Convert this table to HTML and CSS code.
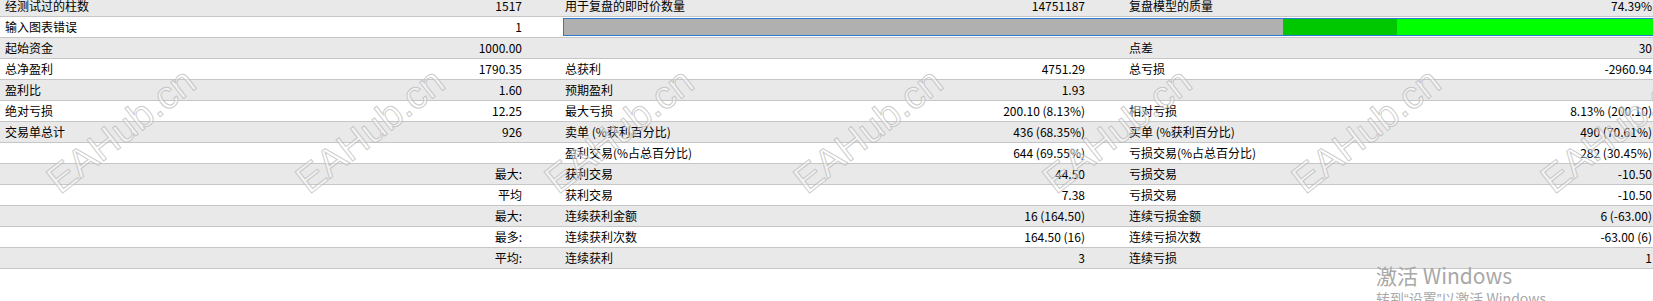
FILE: index.html
```html
<!DOCTYPE html>
<html lang="zh-CN">
<head>
<meta charset="utf-8">
<title>测试报告</title>
<link rel="stylesheet" href="styles.css">
</head>
<body>
<div class="report">
  <div class="row alt">
    <div class="c1">经测试过的柱数</div><div class="c2">1517</div>
    <div class="c3">用于复盘的即时价数量</div><div class="c4">14751187</div>
    <div class="c5">复盘模型的质量</div><div class="c6">74.39%</div>
  </div>
  <div class="row">
    <div class="c1">输入图表错误</div><div class="c2">1</div>
    <div class="bar"><div class="seg gray"></div><div class="seg dark"></div><div class="seg light"></div></div>
  </div>
  <div class="row alt">
    <div class="c1">起始资金</div><div class="c2">1000.00</div>
    <div class="c3"></div><div class="c4"></div>
    <div class="c5">点差</div><div class="c6">30</div>
  </div>
  <div class="row">
    <div class="c1">总净盈利</div><div class="c2">1790.35</div>
    <div class="c3">总获利</div><div class="c4">4751.29</div>
    <div class="c5">总亏损</div><div class="c6">-2960.94</div>
  </div>
  <div class="row alt">
    <div class="c1">盈利比</div><div class="c2">1.60</div>
    <div class="c3">预期盈利</div><div class="c4">1.93</div>
    <div class="c5"></div><div class="c6"></div>
  </div>
  <div class="row">
    <div class="c1">绝对亏损</div><div class="c2">12.25</div>
    <div class="c3">最大亏损</div><div class="c4">200.10 (8.13%)</div>
    <div class="c5">相对亏损</div><div class="c6">8.13% (200.10)</div>
  </div>
  <div class="row alt">
    <div class="c1">交易单总计</div><div class="c2">926</div>
    <div class="c3">卖单 (%获利百分比)</div><div class="c4">436 (68.35%)</div>
    <div class="c5">买单 (%获利百分比)</div><div class="c6">490 (70.61%)</div>
  </div>
  <div class="row">
    <div class="c1"></div><div class="c2"></div>
    <div class="c3">盈利交易(%占总百分比)</div><div class="c4">644 (69.55%)</div>
    <div class="c5">亏损交易(%占总百分比)</div><div class="c6">282 (30.45%)</div>
  </div>
  <div class="row alt">
    <div class="c1"></div><div class="c2">最大:</div>
    <div class="c3">获利交易</div><div class="c4">44.50</div>
    <div class="c5">亏损交易</div><div class="c6">-10.50</div>
  </div>
  <div class="row">
    <div class="c1"></div><div class="c2">平均</div>
    <div class="c3">获利交易</div><div class="c4">7.38</div>
    <div class="c5">亏损交易</div><div class="c6">-10.50</div>
  </div>
  <div class="row alt">
    <div class="c1"></div><div class="c2">最大:</div>
    <div class="c3">连续获利金额</div><div class="c4">16 (164.50)</div>
    <div class="c5">连续亏损金额</div><div class="c6">6 (-63.00)</div>
  </div>
  <div class="row">
    <div class="c1"></div><div class="c2">最多:</div>
    <div class="c3">连续获利次数</div><div class="c4">164.50 (16)</div>
    <div class="c5">连续亏损次数</div><div class="c6">-63.00 (6)</div>
  </div>
  <div class="row alt">
    <div class="c1"></div><div class="c2">平均:</div>
    <div class="c3">连续获利</div><div class="c4">3</div>
    <div class="c5">连续亏损</div><div class="c6">1</div>
  </div>
</div>

<div class="watermarks">
  <span class="wm">EAHub.cn</span>
  <span class="wm">EAHub.cn</span>
  <span class="wm">EAHub.cn</span>
  <span class="wm">EAHub.cn</span>
  <span class="wm">EAHub.cn</span>
  <span class="wm">EAHub.cn</span>
  <span class="wm">EAHub.cn</span>
</div>

<div class="activate">
  <div class="act-title">激活 Windows</div>
  <div class="act-sub">转到<span class="q">“</span>设置<span class="q">”</span>以激活 Windows。</div>
</div>
</body>
</html>
```

FILE: styles.css
```css
html, body {
  margin: 0;
  padding: 0;
}
body {
  width: 1653px;
  height: 301px;
  overflow: hidden;
  position: relative;
  background: #ffffff;
  color: #000000;
  font-family: "Noto Sans CJK SC", "Noto Sans", sans-serif;
  font-size: 12px;
}
.report {
  margin-top: -4px;
}
.row {
  display: grid;
  grid-template-columns: 300px 263px 267px 297px 273px 253px;
  height: 20px;
  line-height: 20px;
  border-bottom: 1px solid #c6c6c6;
  background: #ffffff;
  white-space: nowrap;
}
.row.alt {
  background: #e9e9e9;
}
.c1 { padding-left: 5px; }
.c2 { text-align: right; padding-right: 41px; }
.c3 { padding-left: 2px; }
.c4 { text-align: right; padding-right: 42px; }
.c5 { padding-left: 2px; }
.c6 { text-align: right; padding-right: 1px; }

.bar {
  grid-column: 3 / 7;
  margin: 1px 0;
  height: 18px;
  box-sizing: border-box;
  border: 1px solid #2a7ad2;
  border-right: none;
  display: flex;
}
.seg { height: 100%; }
.seg.gray { width: 719px; background: #b0b0b0; }
.seg.dark { width: 114px; background: #00c800; }
.seg.light { flex: 1; background: #00ff00; }

.watermarks {
  position: absolute;
  left: 60px;
  top: 162px;
  display: flex;
  pointer-events: none;
}
.wm {
  display: block;
  width: 249px;
  font-family: "Liberation Sans", Arial, sans-serif;
  font-size: 39px;
  line-height: 39px;
  color: rgba(255, 255, 255, 0.45);
  -webkit-text-stroke: 1px rgba(180, 180, 180, 0.7);
  transform: rotate(-38deg);
  transform-origin: 0 33px;
  white-space: nowrap;
}

.activate {
  position: absolute;
  left: 1376px;
  top: 261px;
  color: #a8a8a8;
  pointer-events: none;
  white-space: nowrap;
}
.act-title {
  font-size: 21px;
  line-height: 28px;
}
.act-sub {
  font-size: 14px;
  line-height: 18px;
}
.q {
  font-family: "Liberation Sans", sans-serif;
}
```
